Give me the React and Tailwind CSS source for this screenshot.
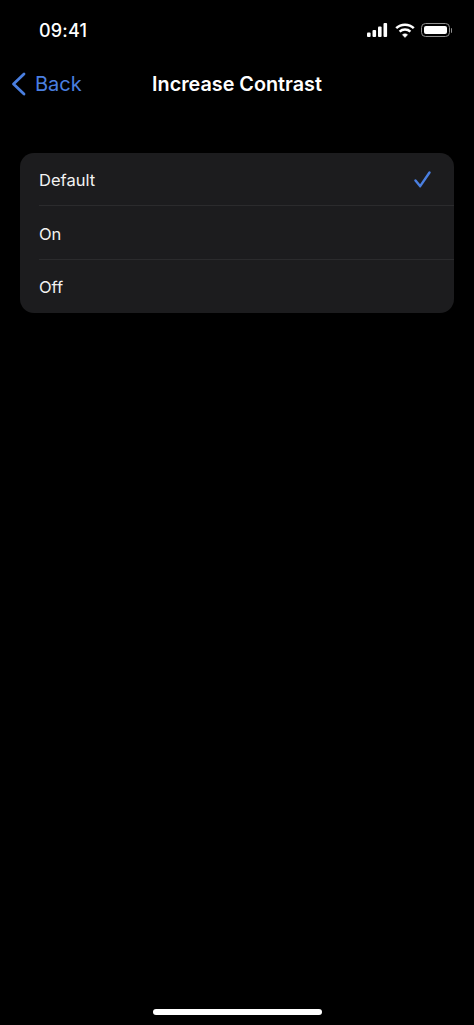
import React from 'react';

const font = "font-['Inter','Liberation_Sans',sans-serif]";

const StatusBar = () => (
  <div className="flex h-[60px] items-center justify-between pl-[39px] pr-[22px]">
    <span className="pt-[2px] text-[18px] font-medium leading-none tracking-[0.2px] text-white">09:41</span>
    <div className="flex items-center gap-[7px]">
      <svg width="21" height="14" viewBox="0 0 21 14" fill="white">
        <rect x="0" y="9.5" width="3.6" height="4.5" rx="1" />
        <rect x="5.5" y="7" width="3.6" height="7" rx="1" />
        <rect x="11" y="3.5" width="3.6" height="10.5" rx="1" />
        <rect x="16.5" y="0" width="3.6" height="14" rx="1" />
      </svg>
      <svg width="20" height="15" viewBox="0 0 20 15" fill="none" stroke="white" strokeWidth="2.5">
        <path d="M1.2 5.2C6 .6 14 .6 18.8 5.2" />
        <path d="M4.6 8.6C7.6 5.8 12.4 5.8 15.4 8.6" />
        <path d="M10 14.5l-2.6-2.8c1.5-1.2 3.7-1.2 5.2 0z" fill="white" strokeWidth="0.5" />
      </svg>
      <div className="-ml-[1px] flex items-center">
        <div className="h-[14px] w-[29px] rounded-[4.5px] border border-[#8e8e8e] p-[2px]">
          <div className="h-full w-full rounded-[2px] bg-white" />
        </div>
        <div className="ml-[1px] h-[5px] w-[1.5px] rounded-r-sm bg-[#8e8e8e]" />
      </div>
    </div>
  </div>
);

const NavBar = () => (
  <div className="relative flex h-[48px] items-center justify-center">
    <button className="absolute left-[11px] top-[12px] flex items-center gap-[9px] text-[#4a7fe0]">
      <svg width="15" height="24" viewBox="0 0 15 24" fill="none" stroke="#4a7fe0" strokeWidth="2.8" strokeLinecap="round" strokeLinejoin="round">
        <path d="M13 2L2.5 12L13 22" />
      </svg>
      <span className="text-[20px] leading-none">Back</span>
    </button>
    <h1 className="pt-[2px] text-[19.8px] font-semibold leading-none text-white">Increase Contrast</h1>
  </div>
);

const Row = ({ label, checked, last }) => (
  <div className="ml-[19px]">
    <div className={`flex h-[53.33px] items-center justify-between border-b pr-[23px] ${last ? 'border-transparent' : 'border-[#2b2b2d]'}`}>
      <span className="pt-[3px] text-[16.5px] leading-none text-[#f2f2f2]">{label}</span>
      {checked && (
        <svg width="17" height="17" viewBox="0 0 17 17" fill="none" stroke="#4a7fe0" strokeWidth="2.4" strokeLinecap="round" strokeLinejoin="round">
          <path d="M1.5 9.5L6.2 15.2L15.5 1.5" />
        </svg>
      )}
    </div>
  </div>
);

const App = () => {
  const options = ['Default', 'On', 'Off'];

  return (
    <div className={`h-[1025px] w-[474px] overflow-hidden bg-black ${font} flex flex-col`}>
      <StatusBar />
      <NavBar />
      <div className="mx-[20px] mt-[45px] overflow-hidden rounded-[14px] bg-[#1c1c1e]">
        {options.map((o, i) => (
          <Row key={o} label={o} checked={i === 0} last={i === options.length - 1} />
        ))}
      </div>
      <div className="mt-auto flex justify-center pb-[10px]">
        <div className="h-[6px] w-[169px] rounded-full bg-white" />
      </div>
    </div>
  );
};

export default App;
